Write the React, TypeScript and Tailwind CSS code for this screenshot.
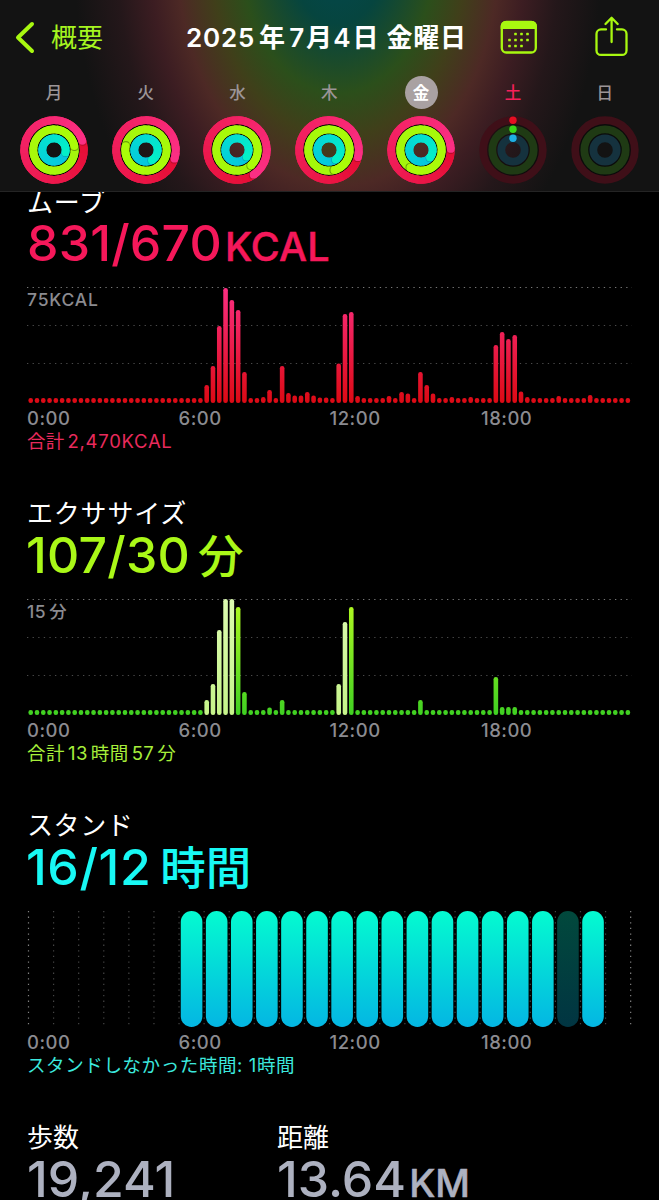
import React from "react";

const FONT =
  "font-['Inter','Noto_Sans_CJK_JP',sans-serif]";

function Bar({ values, id, from, to, pale = [] }: { values: Record<number, number>; id: string; from: string; to: string; pale?: number[] }) {
  const bars = Array.from({ length: 96 }, (_, i) => values[i] ?? 5);
  return (
    <svg width="659" height="120" viewBox="0 0 659 120" className="block">
      <defs>
        <linearGradient id={id} gradientUnits="userSpaceOnUse" x1="0" y1="2" x2="0" y2="118">
          <stop offset="0" stopColor={from} />
          <stop offset="1" stopColor={to} />
        </linearGradient>
        <linearGradient id={id + "-pale"} gradientUnits="userSpaceOnUse" x1="0" y1="2" x2="0" y2="118">
          <stop offset="0" stopColor="#dcfbb0" />
          <stop offset="1" stopColor="#c6f48a" />
        </linearGradient>
      </defs>
      {[2.5, 40.5, 78.5].map((y, i) => (
        <line key={y} x1="27" x2="632" y1={y} y2={y} stroke={i ? "#4a4a4a" : "#777"} strokeWidth="1.2" strokeDasharray="1.3 4.3" />
      ))}
      {bars.map((h, i) => (
        <rect key={i} x={30.7 + i * 6.286 - 2.3} y={118 - h} width="4.6" height={h} rx="2.2" fill={pale.includes(i) ? `url(#${id}-pale)` : `url(#${id})`} />
      ))}
    </svg>
  );
}

function StandChart() {
  return (
    <svg width="659" height="120" viewBox="0 0 659 120" className="block">
      <defs>
        <linearGradient id="stand" x1="0" y1="0" x2="0" y2="1">
          <stop offset="0" stopColor="#04fbd0" />
          <stop offset="1" stopColor="#04b6e3" />
        </linearGradient>
      </defs>
      {Array.from({ length: 25 }, (_, i) => (
        <line key={i} x1={28.5 + i * 25.09} x2={28.5 + i * 25.09} y1="2" y2="117" stroke={i % 24 === 0 ? "#808080" : "#454545"} strokeWidth="1.2" strokeDasharray="1.3 4.3" />
      ))}
      {Array.from({ length: 17 }, (_, i) => (
        <rect key={i} x={28.5 + (i + 6.5) * 25.09 - 10.8} y="2" width="21.6" height="116" rx="10.8" fill="url(#stand)" opacity={i === 15 ? 0.29 : 1} />
      ))}
    </svg>
  );
}

function point(r: number, deg: number) {
  const a = ((deg - 90) * Math.PI) / 180;
  return [34 + r * Math.cos(a), 34 + r * Math.sin(a)];
}

function mix(a: number[], b: number[], t: number) {
  return `rgb(${a.map((v, i) => Math.round(v + (b[i] - v) * t)).join(",")})`;
}

const SEGMENTS = 30;

function Rings({ day, ends }: { day: number; ends: number[] | null }) {
  const radii = [29.8, 20.7, 11.7];
  const dim = ["#3f0f18", "#1f3a14", "#15323e"];
  const tail = [[230, 14, 52], [164, 246, 12], [6, 196, 224]];
  const tip = [[251, 47, 132], [170, 252, 8], [4, 239, 200]];
  return (
    <svg width="68" height="68" viewBox="0 0 68 68" className="block">
      <circle cx="34" cy="34" r="20.7" fill="none" stroke="#000" strokeOpacity={ends ? 0.75 : 0.4} strokeWidth="24" />
      {radii.map((r, n) => {
        if (!ends) {
          return (
            <g key={n}>
              <circle cx="34" cy="34" r={r} fill="none" stroke={dim[n]} strokeWidth="7.8" />
              {day === 5 && <circle cx="34" cy={34 - r} r="3.7" fill={["#e70e22", "#3bd51a", "#1fb0e4"][n]} />}
            </g>
          );
        }
        const end = ends[n];
        const [x, y] = point(r, end);
        const [sx, sy] = point(r, end + (n === 0 ? 2 : 3));
        const step = 360 / SEGMENTS;
        const segment = (i: number) => {
          const [ax, ay] = point(r, end + i * step);
          const [bx, by] = point(r, end + Math.min(i + 1.5, SEGMENTS) * step);
          return <path key={i} d={`M${ax} ${ay}A${r} ${r} 0 0 1 ${bx} ${by}`} stroke={mix(tail[n], tip[n], i / (SEGMENTS - 1))} />;
        };
        return (
          <g key={n} fill="none" strokeWidth="7.8">
            <circle cx="34" cy="34" r={r} stroke={mix(tail[n], tip[n], 0.5)} />
            {Array.from({ length: SEGMENTS - 2 }, (_, i) => segment(i))}
            <circle cx={sx} cy={sy} r="3.9" fill="#000" fillOpacity={n === 1 ? 0.35 : 0.2} stroke="none" />
            {[2, 1].map((k) => segment(SEGMENTS - k))}
            <circle cx={x} cy={y} r="3.9" fill={mix(tail[n], tip[n], 1)} stroke="none" />
          </g>
        );
      })}
    </svg>
  );
}

const days = [
  { label: "月", ends: [72, 79, 102] },
  { label: "火", ends: [107, 281, 150] },
  { label: "水", ends: [146, 137, 125] },
  { label: "木", ends: [104, 165, 145] },
  { label: "金", ends: [88, 211, 130] },
  { label: "土", ends: null },
  { label: "日", ends: null },
];

function Axis() {
  return (
    <div className="grid h-[22px] grid-cols-[151.5px_151px_151.5px_auto] pl-[27px] text-[18.5px] leading-[22px] font-medium tracking-[0.5px] text-[#8b8b90]">
      {["0:00", "6:00", "12:00", "18:00"].map((t) => (
        <span key={t}>{t}</span>
      ))}
    </div>
  );
}

export default function App() {
  return (
    <div className={`h-[1200px] w-[659px] overflow-hidden bg-black text-white ${FONT}`}>
      <header className="h-[192px] border-b border-[#242424] bg-[#131313] bg-[radial-gradient(ellipse_240px_345px_at_338px_-45px,#034850_0%,#06453f_20%,#2b4f1b_40%,#403f1a_53%,#4d2925_67%,#3c1d22_78%,#24171a_92%,#131313_110%)]">
        <div className="flex h-[76px] items-center">
          <svg width="36" height="76" viewBox="0 0 36 76" fill="none" stroke="#a8f810" strokeWidth="4" strokeLinecap="round" strokeLinejoin="round">
            <path d="M32 24 18 37.5 32 51" />
          </svg>
          <span className="ml-[15px] w-[135px] text-[26px] leading-[38px] text-[#a6f520]">概要</span>
          <h1 className="flex w-[314px] text-[26px] leading-[38px] font-semibold whitespace-nowrap">
            <span className="tracking-[0.8px]">2025</span>
            <span className="ml-[4px]">年</span>
            <span className="ml-[4px]">7</span>
            <span className="ml-[2px]">月</span>
            <span className="ml-[1px]">4</span>
            <span className="ml-[2px]">日</span>
            <span className="ml-[8px] tracking-[0.8px]">金曜日</span>
          </h1>
          <svg width="38" height="76" viewBox="500 0 38 76" fill="none">
            <rect x="501.8" y="22" width="34" height="30.5" rx="4.5" stroke="#a8f810" strokeWidth="2.3" />
            <path d="M500.700 29v-3a5 5 0 0 1 5-5h26.200a5 5 0 0 1 5 5v3z" fill="#a8f810" />
            <g fill="#a8f810">
              {[[515.5, 34], [521.5, 34], [527.5, 34], [509.5, 40], [515.5, 40], [521.5, 40], [527.5, 40], [509.5, 46], [515.5, 46], [521.5, 46]].map(([x, y]) => (
                <rect key={`${x}-${y}`} x={x - 1.3} y={y - 1.3} width="2.6" height="2.6" rx=".6" />
              ))}
            </g>
          </svg>
          <svg className="ml-[54px]" width="40" height="76" viewBox="592 0 40 76" fill="none" stroke="#a8f810" strokeWidth="2.3" strokeLinecap="round" strokeLinejoin="round">
            <path d="M606 29.4h-5a4.5 4.5 0 0 0-4.500 4.500v16.500a4.500 4.500 0 0 0 4.500 4.500h21a4.500 4.500 0 0 0 4.500-4.500V33.900a4.500 4.500 0 0 0-4.500-4.500h-5M611.600 42V18M605.500 24l6.100-6.200 6.100 6.200" />
          </svg>
        </div>
        <div className="grid grid-cols-[repeat(7,91.8px)] pl-[8px]">
          {days.map((d, i) => (
            <div key={d.label} className="flex flex-col items-center">
              <span
                className={`flex size-[33px] items-center justify-center rounded-full text-[16.5px] leading-[24px] ${
                  i === 4 ? "bg-[#a9a1a2] font-bold text-white" : i === 5 ? "font-medium text-[#f5205a]" : "font-medium text-[#9c9597]"
                }`}
              >
                {d.label}
              </span>
              <div className="mt-[7px]">
                <Rings day={i} ends={d.ends} />
              </div>
            </div>
          ))}
        </div>
      </header>

      <section className="h-[303px] overflow-hidden">
        <h2 className="-mt-[7px] h-[34px] pl-[27px] text-[26px] leading-[36px] tracking-[0.8px]">ムーブ</h2>
        <p className="flex h-[48px] items-baseline pl-[27px] text-[50px] leading-[48px] font-medium text-[#f5185a]">
          <span className="tracking-[0.2px]">831/670</span>
          <span className="ml-[3px] text-[39.5px] tracking-[0.1px] [-webkit-text-stroke:0.5px]">KCAL</span>
        </p>
        <div className="mt-[18px] grid">
          <div className="col-start-1 row-start-1"><Bar id="move" from="#fb2f83" to="#dc0a14" values={{ 28: 18, 29: 37, 30: 77, 31: 115, 32: 103, 33: 93, 34: 31, 37: 6, 38: 13, 40: 37, 41: 10, 42: 7.5, 43: 7.5, 44: 11, 45: 7.5, 46: 5.5, 47: 5.5, 49: 39.5, 50: 89, 51: 91, 52: 7, 57: 7, 59: 11, 60: 9.5, 62: 31, 63: 18, 64: 9.5, 67: 6, 70: 6, 74: 58, 75: 71, 76: 64, 77: 68, 78: 11.5, 79: 6, 84: 7, 89: 8 }} /></div>
          <span className="col-start-1 row-start-1 pt-[4px] pl-[27px] text-[17.500px] leading-[22px] font-medium tracking-[0.8px] text-[#8b8b90]">75KCAL</span>
        </div>
        <div className="mt-[2px]"><Axis /></div>
        <p className="flex pl-[27px] text-[18.5px] leading-[24px] text-[#e82a5c]"><span className="tracking-[0.3px]">合計</span><span className="ml-[3px] tracking-[0.7px]">2,470KCAL</span></p>
      </section>

      <section className="h-[312px]">
        <h2 className="h-[36px] pt-px pl-[27px] text-[26px] leading-[36px] tracking-[0.8px]">エクササイズ</h2>
        <p className="flex h-[48px] items-baseline pl-[26px] text-[50px] leading-[48px] font-medium text-[#aaf818]">
          <span className="tracking-[0.2px]">107/30</span>
          <span className="ml-[8px] text-[45.5px]">分</span>
        </p>
        <div className="mt-[18px] grid">
          <div className="col-start-1 row-start-1"><Bar id="exercise" from="#b4fa20" to="#3fd022" pale={[28, 29, 30, 31, 32, 49, 50]} values={{ 28: 15, 29: 31, 30: 85, 31: 116, 32: 116, 33: 108, 34: 23, 38: 7.5, 40: 15, 49: 31, 50: 93, 51: 108, 62: 15, 74: 38, 75: 8, 76: 8, 77: 8 }} /></div>
          <span className="col-start-1 row-start-1 flex pt-[4px] pl-[27px] text-[17.500px] leading-[22px] font-medium text-[#8b8b90]"><span className="tracking-[0.6px]">15</span><span className="ml-[3px]">分</span></span>
        </div>
        <div className="mt-[2px]"><Axis /></div>
        <p className="flex gap-[3px] pl-[27px] text-[18.5px] leading-[24px] tracking-[0.45px] text-[#a6ee3a]"><span>合計</span><span>13</span><span>時間</span><span>57</span><span>分</span></p>
      </section>

      <section className="h-[312px]">
        <h2 className="h-[36px] pt-px pl-[27px] text-[26px] leading-[36px] tracking-[0.6px]">スタンド</h2>
        <p className="flex h-[48px] items-baseline pl-[26px] text-[50px] leading-[48px] font-medium text-[#18f8f4]">
          <span className="tracking-[0.6px]">16/12</span>
          <span className="ml-[9px] text-[45.5px]">時間</span>
        </p>
        <div className="mt-[18px]"><StandChart /></div>
        <div className="mt-[2px]"><Axis /></div>
        <p className="pl-[27px] text-[18.5px] leading-[24px] tracking-[0.6px] text-[#3ce8de]">スタンドしなかった時間: 1時間</p>
      </section>

      <section className="grid grid-cols-[250px_auto] pl-[27px]">
        <div>
          <h2 className="h-[36px] pt-px text-[26px] leading-[36px]">歩数</h2>
          <p className="text-[50px] leading-[48px] font-medium text-[#adb1c0]">19,241</p>
        </div>
        <div>
          <h2 className="h-[36px] pt-px text-[26px] leading-[36px]">距離</h2>
          <p className="flex items-baseline text-[50px] leading-[48px] font-medium text-[#adb1c0]"><span>13.64</span><span className="ml-[3px] text-[38px] [-webkit-text-stroke:0.5px]">KM</span></p>
        </div>
      </section>
    </div>
  );
}
